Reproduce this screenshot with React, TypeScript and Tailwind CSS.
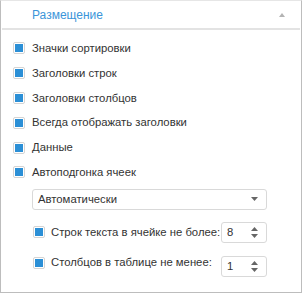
import React from 'react';

function Box() {
  return (
    <span className="w-[12px] h-[12px] shrink-0 border border-[#d4d4d4] rounded-[2px] flex items-center justify-center bg-white">
      <span className="w-[8px] h-[8px] bg-[#2b8fd6]" />
    </span>
  );
}

function Check({ label }: { label: string }) {
  return (
    <div className="flex items-center h-[24.8px]">
      <Box />
      <span className="ml-[7px] text-[#333]">{label}</span>
    </div>
  );
}

function Spin({ value }: { value: string }) {
  return (
    <div className="w-[46px] h-[21px] border border-[#d9d9d9] rounded-[3px] bg-white flex items-center justify-between pl-[5px] pr-[8px]">
      <span className="text-[#333]">{value}</span>
      <span className="flex flex-col items-center gap-[3px]">
        <svg width="7" height="4" viewBox="0 0 7 4"><path d="M0 4 L3.5 0 L7 4 Z" fill="#666" /></svg>
        <svg width="7" height="4" viewBox="0 0 7 4"><path d="M0 0 L3.5 4 L7 0 Z" fill="#666" /></svg>
      </span>
    </div>
  );
}

export default function App() {
  return (
    <div className="w-[303px] h-[294px] bg-white" style={{ fontFamily: '"Liberation Sans", Arial, sans-serif' }}>
      <div className="w-[302px] h-[293px] border border-[#bdbdbd] border-t-[#e6e6e6] text-[11.3px]">
        <div className="h-[29px] flex items-center justify-between pl-[30px] pr-[15px] border-b-2 border-[#e3e3e3] mx-[1px]">
          <span className="text-[#3b95d9] text-[12px]">Размещение</span>
          <svg width="6" height="4" viewBox="0 0 6 4"><path d="M0 4 L3 0 L6 4 Z" fill="#b3b3b3" /></svg>
        </div>
        <div className="pl-[12px] pt-[6px]">
          <Check label="Значки сортировки" />
          <Check label="Заголовки строк" />
          <Check label="Заголовки столбцов" />
          <Check label="Всегда отображать заголовки" />
          <Check label="Данные" />
          <Check label="Автоподгонка ячеек" />
          <div className="pl-[19px] pr-[34px] mt-[4px]">
            <div className="h-[21px] border border-[#d9d9d9] rounded-[3px] flex items-center justify-between pl-[5px] pr-[8px]">
              <span className="text-[#333]">Автоматически</span>
              <svg width="7" height="4" viewBox="0 0 7 4"><path d="M0 0 L3.5 4 L7 0 Z" fill="#666" /></svg>
            </div>
            <div className="flex items-center justify-between mt-[12px]">
              <div className="flex items-center pl-[1px]">
                <Box />
                <span className="ml-[6px] text-[#333]">Строк текста в ячейке не более:</span>
              </div>
              <Spin value="8" />
            </div>
            <div className="flex justify-between mt-[13px]">
              <div className="flex items-center h-[14px] pl-[1px]">
                <Box />
                <span className="ml-[6px] text-[#333]">Столбцов в таблице не менее:</span>
              </div>
              <Spin value="1" />
            </div>
          </div>
        </div>
      </div>
    </div>
  );
}
